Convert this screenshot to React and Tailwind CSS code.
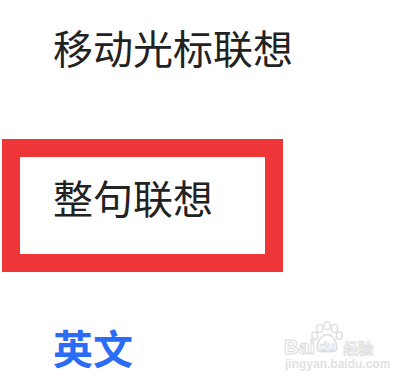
import React from 'react';

const font = { fontFamily: '"Noto Sans CJK SC", "Noto Sans", sans-serif' };
const latin = { fontFamily: '"Liberation Sans", sans-serif' };

// faint "Baidu 经验" watermark in the corner
const Watermark = () => (
  <div className="absolute left-[284px] top-[321px] flex flex-col select-none">
    <div className="flex items-end">
      <span className="text-[20px] leading-[18px] font-bold text-white pb-[1px]" style={{ ...latin, WebkitTextStroke: '1px #dcdcdc' }}>
        Bai
      </span>
      <span className="relative -ml-[4px] w-[32px] h-[36px]">
        <svg width="32" height="32" viewBox="0 0 26 26" fill="none" stroke="#dedede" strokeWidth="1.2">
          <ellipse cx="7" cy="6" rx="2.6" ry="3.4" />
          <ellipse cx="13" cy="3.8" rx="2.6" ry="3.2" />
          <ellipse cx="19" cy="6" rx="2.6" ry="3.4" />
          <ellipse cx="3" cy="12" rx="2.3" ry="3" />
          <ellipse cx="23" cy="12" rx="2.3" ry="3" />
          <path d="M5 22c0-6 4-11 8-11s8 5 8 11c0 3-3 3-8 3s-8 0-8-3z" />
        </svg>
        <span className="absolute inset-x-0 bottom-[3px] text-center text-[13px] leading-[14px] font-bold text-white" style={{ ...latin, WebkitTextStroke: '0.8px #dcdcdc' }}>
          du
        </span>
      </span>
      <span className="text-[15px] leading-[18px] font-bold text-white" style={{ ...font, WebkitTextStroke: '0.8px #dcdcdc' }}>
        经验
      </span>
    </div>
    <span className="pl-[1px] mt-[1px] text-[12px] leading-[12px] font-bold text-[#e2e2e2]" style={latin}>
      jingyan.baidu.com
    </span>
  </div>
);

export default function App() {
  return (
    <div className="relative w-[402px] h-[384px] bg-white overflow-hidden" style={font}>
      <div className="flex flex-col pt-[27px]">
        <div className="pl-[53px] text-[40px] leading-[40px] text-[#222222]">移动光标联想</div>
        <div className="ml-[2px] mt-[72px] w-[281px] h-[133px] border-[18px] border-[#ee3537] pl-[33px] pt-[20px]">
          <div className="text-[40px] leading-[40px] text-[#222222]">整句联想</div>
        </div>
        <div className="pl-[53px] mt-[55px] text-[40px] leading-[40px] font-bold text-[#2a6cf5]">英文</div>
      </div>
      <Watermark />
    </div>
  );
}
